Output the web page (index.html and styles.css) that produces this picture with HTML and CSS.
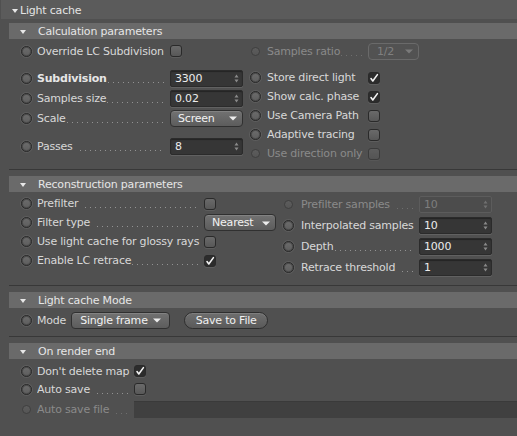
FILE: index.html
```html
<!DOCTYPE html>
<html>
<head>
<meta charset="utf-8">
<title>Light cache</title>
<link rel="stylesheet" href="styles.css">
</head>
<body>
<div class="panel">
  <div class="top-head"><span class="tri"></span><span>Light cache</span></div>

  <section class="group">
    <div class="ghead"><span class="tri"></span><span>Calculation parameters</span></div>
    <div class="gbody calc-body">
      <div class="first-row">
        <div class="item calc-l">
          <span class="radio"></span>
          <span class="la la-calc-l"><span class="lbl">Override LC Subdivision</span></span>
          <span class="cb"></span>
        </div>
        <div class="item calc-r dis">
          <span class="radio sm"></span>
          <span class="la la-calc-r"><span class="lbl">Samples ratio</span><span class="dots"></span></span>
          <span class="dd dd-dis w-ratio"><span class="dd-t">1/2</span><svg class="arr" width="8" height="5" viewBox="0 0 8 5"><path d="M0 0.5H8L4 4.5Z" fill="#7a7a7a"/></svg></span>
        </div>
      </div>
      <div class="cols">
        <div class="col calc-l">
          <div class="item h20">
            <span class="radio"></span>
            <span class="la la-calc-l"><span class="lbl b">Subdivision</span><span class="dots"></span></span>
            <span class="field w73"><span class="fv">3300</span><svg class="spin" width="5" height="9" viewBox="0 0 5 9"><path d="M2.5 0.5L4.5 3.5H0.5Z M2.5 8.5L4.5 5.5H0.5Z" fill="#8a8a8a"/></svg></span>
          </div>
          <div class="item h20">
            <span class="radio"></span>
            <span class="la la-calc-l"><span class="lbl">Samples size</span><span class="dots"></span></span>
            <span class="field w73"><span class="fv">0.02</span><svg class="spin" width="5" height="9" viewBox="0 0 5 9"><path d="M2.5 0.5L4.5 3.5H0.5Z M2.5 8.5L4.5 5.5H0.5Z" fill="#8a8a8a"/></svg></span>
          </div>
          <div class="item h20">
            <span class="radio"></span>
            <span class="la la-calc-l"><span class="lbl">Scale</span><span class="dots"></span></span>
            <span class="dd w73"><span class="dd-t">Screen</span><svg class="arr" width="8" height="5" viewBox="0 0 8 5"><path d="M0 0.5H8L4 4.5Z" fill="#ededed"/></svg></span>
          </div>
          <div class="item h20 passes">
            <span class="radio"></span>
            <span class="la la-calc-l"><span class="lbl">Passes</span><span class="dots gap"></span></span>
            <span class="field w73"><span class="fv">8</span><svg class="spin" width="5" height="9" viewBox="0 0 5 9"><path d="M2.5 0.5L4.5 3.5H0.5Z M2.5 8.5L4.5 5.5H0.5Z" fill="#8a8a8a"/></svg></span>
          </div>
        </div>
        <div class="col calc-r">
          <div class="item h19">
            <span class="radio"></span>
            <span class="la la-calc-r"><span class="lbl">Store direct light</span></span>
            <span class="cb on"><svg width="10" height="10" viewBox="0 0 10 10"><path d="M2 5.6L3.8 8L8.4 1.6" fill="none" stroke="#f2f2f2" stroke-width="1.6" stroke-linecap="round" stroke-linejoin="round"/></svg></span>
          </div>
          <div class="item h19">
            <span class="radio"></span>
            <span class="la la-calc-r"><span class="lbl">Show calc. phase</span></span>
            <span class="cb on"><svg width="10" height="10" viewBox="0 0 10 10"><path d="M2 5.6L3.8 8L8.4 1.6" fill="none" stroke="#f2f2f2" stroke-width="1.6" stroke-linecap="round" stroke-linejoin="round"/></svg></span>
          </div>
          <div class="item h19">
            <span class="radio"></span>
            <span class="la la-calc-r"><span class="lbl">Use Camera Path</span></span>
            <span class="cb"></span>
          </div>
          <div class="item h19">
            <span class="radio"></span>
            <span class="la la-calc-r"><span class="lbl">Adaptive tracing</span></span>
            <span class="cb"></span>
          </div>
          <div class="item h19 dis">
            <span class="radio sm"></span>
            <span class="la la-calc-r"><span class="lbl">Use direction only</span></span>
            <span class="cb"></span>
          </div>
        </div>
      </div>
    </div>
  </section>

  <section class="group">
    <div class="ghead"><span class="tri"></span><span>Reconstruction parameters</span></div>
    <div class="gbody recon-body">
      <div class="cols">
        <div class="col recon-l">
          <div class="item h19">
            <span class="radio"></span>
            <span class="la la-recon-l"><span class="lbl">Prefilter</span><span class="dots gap"></span></span>
            <span class="cb"></span>
          </div>
          <div class="item h19">
            <span class="radio"></span>
            <span class="la la-recon-l"><span class="lbl">Filter type</span><span class="dots gap"></span></span>
            <span class="dd w72"><span class="dd-t">Nearest</span><svg class="arr" width="8" height="5" viewBox="0 0 8 5"><path d="M0 0.5H8L4 4.5Z" fill="#ededed"/></svg></span>
          </div>
          <div class="item h19">
            <span class="radio"></span>
            <span class="la la-recon-l"><span class="lbl">Use light cache for glossy rays</span></span>
            <span class="cb"></span>
          </div>
          <div class="item h19">
            <span class="radio"></span>
            <span class="la la-recon-l"><span class="lbl">Enable LC retrace</span><span class="dots"></span></span>
            <span class="cb on"><svg width="10" height="10" viewBox="0 0 10 10"><path d="M2 5.6L3.8 8L8.4 1.6" fill="none" stroke="#f2f2f2" stroke-width="1.6" stroke-linecap="round" stroke-linejoin="round"/></svg></span>
          </div>
        </div>
        <div class="col recon-r">
          <div class="item h21 dis">
            <span class="radio sm"></span>
            <span class="la la-recon-r"><span class="lbl">Prefilter samples</span><span class="dots gap"></span></span>
            <span class="field field-dis w73"><span class="fv">10</span><svg class="spin" width="5" height="9" viewBox="0 0 5 9"><path d="M2.5 0.5L4.5 3.5H0.5Z M2.5 8.5L4.5 5.5H0.5Z" fill="#707070"/></svg></span>
          </div>
          <div class="item h21">
            <span class="radio"></span>
            <span class="la la-recon-r"><span class="lbl">Interpolated samples</span></span>
            <span class="field w73"><span class="fv">10</span><svg class="spin" width="5" height="9" viewBox="0 0 5 9"><path d="M2.5 0.5L4.5 3.5H0.5Z M2.5 8.5L4.5 5.5H0.5Z" fill="#8a8a8a"/></svg></span>
          </div>
          <div class="item h21">
            <span class="radio"></span>
            <span class="la la-recon-r"><span class="lbl">Depth</span><span class="dots"></span></span>
            <span class="field w73"><span class="fv">1000</span><svg class="spin" width="5" height="9" viewBox="0 0 5 9"><path d="M2.5 0.5L4.5 3.5H0.5Z M2.5 8.5L4.5 5.5H0.5Z" fill="#8a8a8a"/></svg></span>
          </div>
          <div class="item h21">
            <span class="radio"></span>
            <span class="la la-recon-r"><span class="lbl">Retrace threshold</span><span class="dots gap"></span></span>
            <span class="field w73"><span class="fv">1</span><svg class="spin" width="5" height="9" viewBox="0 0 5 9"><path d="M2.5 0.5L4.5 3.5H0.5Z M2.5 8.5L4.5 5.5H0.5Z" fill="#8a8a8a"/></svg></span>
          </div>
        </div>
      </div>
    </div>
  </section>

  <section class="group">
    <div class="ghead"><span class="tri"></span><span>Light cache Mode</span></div>
    <div class="gbody mode-body">
      <div class="item h18">
        <span class="radio"></span>
        <span class="lbl">Mode</span>
        <span class="dd w99 mode-dd"><span class="dd-t">Single frame</span><svg class="arr" width="8" height="5" viewBox="0 0 8 5"><path d="M0 0.5H8L4 4.5Z" fill="#ededed"/></svg></span>
        <span class="btn">Save to File</span>
      </div>
    </div>
  </section>

  <section class="group last">
    <div class="ghead"><span class="tri"></span><span>On render end</span></div>
    <div class="gbody end-body">
      <div class="item h18">
        <span class="radio"></span>
        <span class="la la-end"><span class="lbl">Don't delete map</span></span>
        <span class="cb on"><svg width="10" height="10" viewBox="0 0 10 10"><path d="M2 5.6L3.8 8L8.4 1.6" fill="none" stroke="#f2f2f2" stroke-width="1.6" stroke-linecap="round" stroke-linejoin="round"/></svg></span>
      </div>
      <div class="item h18">
        <span class="radio"></span>
        <span class="la la-end"><span class="lbl">Auto save</span><span class="dots gap"></span></span>
        <span class="cb"></span>
      </div>
      <div class="item h20 dis autofile">
        <span class="radio sm"></span>
        <span class="la la-end"><span class="lbl">Auto save file</span><span class="dots gap"></span></span>
        <span class="filefield"></span>
      </div>
    </div>
  </section>
</div>
</body>
</html>
```

FILE: styles.css
```css
* { box-sizing: border-box; }

html, body {
  margin: 0;
  padding: 0;
}

body {
  width: 517px;
  height: 436px;
  overflow: hidden;
  background: #505050;
  font-family: "DejaVu Sans", "Liberation Sans", sans-serif;
  font-size: 11px;
  letter-spacing: -0.2px;
  color: #d8d8d8;
}

.panel {
  display: flex;
  flex-direction: column;
}

.top-head {
  height: 19px;
  margin-left: 1px;
  margin-bottom: 4px;
  padding: 2px 0 0 11px;
  background: #5b5b5b;
  display: flex;
  align-items: center;
  color: #e4e4e4;
}

.top-head .tri {
  margin-right: 2px;
}

.tri {
  flex: none;
  width: 0;
  height: 0;
  border-left: 3.5px solid transparent;
  border-right: 3.5px solid transparent;
  border-top: 4px solid #e8e8e8;
  margin-top: 1px;
}

.group {
  margin-left: 9px;
  margin-bottom: 6px;
  border-bottom: 1px solid #383838;
}

.group.last {
  border-bottom: none;
  margin-bottom: 0;
}

.ghead {
  height: 16px;
  background: #6a6a6a;
  display: flex;
  align-items: center;
  padding: 1px 0 0 11px;
  color: #e6e6e6;
}

.ghead .tri {
  margin-right: 12px;
}

.gbody {
  padding-left: 12px;
}

.calc-body { padding-top: 3px; padding-bottom: 6px; }
.recon-body { padding-top: 2px; padding-bottom: 7px; }
.mode-body { padding-top: 3px; padding-bottom: 7px; }
.end-body { padding-top: 3px; padding-bottom: 12px; }

.first-row {
  display: flex;
  height: 18px;
  margin-bottom: 8px;
}

.cols {
  display: flex;
  align-items: flex-start;
}

.col {
  display: flex;
  flex-direction: column;
}

.calc-l { width: 222px; flex: none; }
.calc-r { margin-left: 7px; }
.recon-l { width: 255px; flex: none; }
.recon-r { margin-left: 7px; }

.item {
  display: flex;
  align-items: center;
  height: 18px;
}

.h18 { height: 18px; }
.h19 { height: 19px; }
.h20 { height: 20px; }
.h21 { height: 21px; }

.passes { margin-top: 8px; }
.autofile { margin-top: 1px; }

.radio {
  flex: none;
  width: 11px;
  height: 11px;
  border-radius: 50%;
  border: 1px solid #2a2a2a;
  background: linear-gradient(#6c6c6c, #5e5e5e);
  box-shadow: inset 0 0 0 1px #4c4c4c, 0 0 0 1px rgba(120, 120, 120, 0.35);
  margin-right: 5px;
}

.calc-r .radio { margin-right: 6px; }
.recon-r .radio { margin-right: 7px; }

.radio.sm {
  width: 9px;
  height: 9px;
  margin-left: 1px;
  margin-right: 6px;
  opacity: 0.45;
  box-shadow: none;
}
.calc-r .radio.sm { margin-right: 7px; }
.recon-r .radio.sm { margin-right: 8px; }

.la {
  flex: none;
  display: flex;
  align-items: center;
  overflow: hidden;
}

.la-calc-l { width: 133px; }
.la-calc-r { width: 101px; }
.la-recon-l { width: 167px; }
.la-recon-r { width: 118px; }
.la-end { width: 97px; }

.lbl {
  white-space: nowrap;
  flex: none;
}

.b { font-weight: bold; color: #e6e6e6; }

.dis .lbl { color: #8a8a8a; }

.dots {
  flex: 1;
  height: 1px;
  margin: 8px 5px 0 1px;
  background-image: linear-gradient(to right, #929292 1px, transparent 1px);
  background-size: 5px 1px;
  background-repeat: repeat-x;
}

.dots.gap { margin-left: 7px; }
.dis .dots { background-image: linear-gradient(to right, #6e6e6e 1px, transparent 1px); }

.cb {
  flex: none;
  width: 12px;
  height: 12px;
  border-radius: 3px;
  border: 1px solid #2a2a2a;
  background: linear-gradient(#6a6a6a, #585858);
  box-shadow: 0 1px 0 rgba(255, 255, 255, 0.08);
  display: flex;
  align-items: center;
  justify-content: center;
}

.dis .cb { opacity: 0.55; }

.cb.on {
  background: #2c2c2c;
}

.w73 { width: 73px; }
.w72 { width: 72px; }
.w99 { width: 99px; }
.w-ratio { width: 51px; }

.field {
  flex: none;
  height: 17px;
  border: 1px solid #2b2b2b;
  border-radius: 2px;
  background: #363636;
  box-shadow: inset 0 1px 1px rgba(0, 0, 0, 0.35), 0 1px 0 rgba(255, 255, 255, 0.1);
  display: flex;
  align-items: center;
  justify-content: space-between;
  padding: 0 3px 0 4px;
  color: #ececec;
}

.field-dis {
  background: #4c4c4c;
  border-color: #5c5c5c;
  box-shadow: none;
  color: #7e7e7e;
}

.fv { white-space: nowrap; }

.spin { flex: none; }

.dd {
  flex: none;
  height: 17px;
  border: 1px solid #303030;
  border-radius: 4px;
  background: linear-gradient(#727272, #5c5c5c);
  box-shadow: inset 0 1px 0 rgba(255, 255, 255, 0.12);
  display: flex;
  align-items: center;
  justify-content: space-between;
  padding: 0 5px 0 7px;
  color: #f2f2f2;
}

.dd-t { white-space: nowrap; }

.dd-dis {
  background: #525252;
  border-color: #6a6a6a;
  box-shadow: none;
  color: #808080;
  padding-left: 8px;
}

.arr { flex: none; margin-top: 1px; }

.mode-dd { margin-left: 5px; padding-left: 8px; padding-right: 8px; }

.btn {
  flex: none;
  margin-left: 14px;
  width: 84px;
  height: 17px;
  border-radius: 9px;
  border: 1px solid #2e2e2e;
  background: linear-gradient(#6e6e6e, #5a5a5a);
  box-shadow: inset 0 1px 0 rgba(255, 255, 255, 0.12);
  display: flex;
  align-items: center;
  justify-content: center;
  color: #f0f0f0;
}

.filefield {
  flex: 1;
  height: 17px;
  background: #404040;
  border-top: 1px solid #3a3a3a;
}
```
